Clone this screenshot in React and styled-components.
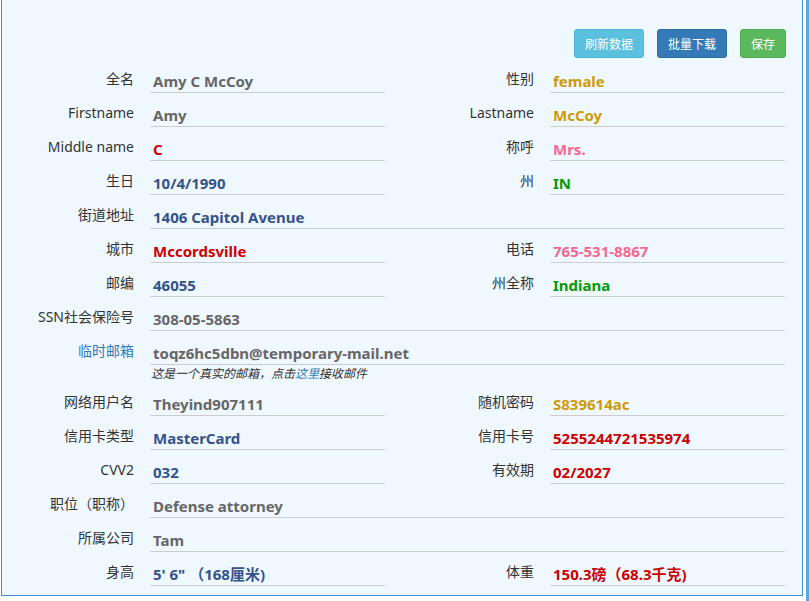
import React from "react";
import styled, { createGlobalStyle } from "styled-components";

const Global = createGlobalStyle`
  html, body { margin: 0; padding: 0; background: #ffffff; }
  body { font-family: "Noto Sans", "Noto Sans CJK SC", sans-serif; color: #333; overflow: hidden; }
`;

const Page = styled.div`
  display: flex;
  align-items: flex-start;
  width: 809px;
  height: 601px;
`;

const Panel = styled.div`
  box-sizing: border-box;
  width: 802px;
  height: 596px;
  margin-left: 1px;
  background: #f0f8ff;
  border: 1px solid #3a8ee0;
  border-top: none;
  padding: 29px 16px 0 0;
`;

const Strip = styled.div`
  width: 3px;
  height: 601px;
  margin-left: 3px;
  background: #5aa7d8;
`;

const Toolbar = styled.div`
  display: flex;
  justify-content: flex-end;
  gap: 13px;
  margin-bottom: 1px;
`;

const variants = {
  info: ["#5bc0de", "#46b8da"],
  primary: ["#337ab7", "#2e6da4"],
  success: ["#5cb85c", "#4cae4c"],
};

const Button = styled.button`
  box-sizing: border-box;
  height: 29px;
  padding: 5px 10px;
  font-family: "Noto Sans CJK SC", sans-serif;
  font-size: 12px;
  line-height: 17px;
  color: #fff;
  border-radius: 3px;
  background: ${(p) => variants[p.$kind][0]};
  border: 1px solid ${(p) => variants[p.$kind][1]};
`;

const Row = styled.div`
  display: grid;
  grid-template-columns: 148px 235px 165px 235px;
  align-items: start;
`;

const Label = styled.div`
  text-align: right;
  padding: 10px 16px 0 0;
  font-size: 14px;
  line-height: 20px;
  color: ${(p) => (p.$link ? "#337ab7" : "#333")};
  white-space: nowrap;
`;

const ValueCol = styled.div`
  grid-column: ${(p) => (p.$full ? "2 / 5" : "auto")};
`;

const colors = {
  gray: "#666666",
  orange: "#cf9a08",
  red: "#cc0000",
  pink: "#f7668f",
  blue: "#34538b",
  green: "#079a07",
};

const Value = styled.div`
  box-sizing: border-box;
  height: 34px;
  padding: 12px 0 1px 3px;
  font-size: 15px;
  font-weight: 700;
  line-height: 20px;
  color: ${(p) => colors[p.$c]};
  border-bottom: 1px solid #cccccc;
  white-space: nowrap;
`;

const Note = styled.div`
  font-size: 12px;
  font-style: italic;
  line-height: 17px;
  color: #333;
  padding-left: 1px;
`;

const Link = styled.span`
  color: #337ab7;
`;

const Field = ({ label, value, c, full, link, children }) => (
  <>
    <Label $link={link}>{label}</Label>
    <ValueCol $full={full}>
      <Value $c={c}>{value}</Value>
      {children}
    </ValueCol>
  </>
);

export default function App() {
  return (
    <>
      <Global />
      <Page>
        <Panel>
          <Toolbar>
            <Button $kind="info">刷新数据</Button>
            <Button $kind="primary">批量下载</Button>
            <Button $kind="success">保存</Button>
          </Toolbar>
          <Row>
            <Field label="全名" value="Amy C McCoy" c="gray" />
            <Field label="性别" value="female" c="orange" />
          </Row>
          <Row>
            <Field label="Firstname" value="Amy" c="gray" />
            <Field label="Lastname" value="McCoy" c="orange" />
          </Row>
          <Row>
            <Field label="Middle name" value="C" c="red" />
            <Field label="称呼" value="Mrs." c="pink" />
          </Row>
          <Row>
            <Field label="生日" value="10/4/1990" c="blue" />
            <Field label="州" value="IN" c="green" />
          </Row>
          <Row>
            <Field label="街道地址" value="1406 Capitol Avenue" c="blue" full />
          </Row>
          <Row>
            <Field label="城市" value="Mccordsville" c="red" />
            <Field label="电话" value="765-531-8867" c="pink" />
          </Row>
          <Row>
            <Field label="邮编" value="46055" c="blue" />
            <Field label="州全称" value="Indiana" c="green" />
          </Row>
          <Row>
            <Field label="SSN社会保险号" value="308-05-5863" c="gray" full />
          </Row>
          <Row>
            <Field label="临时邮箱" value="toqz6hc5dbn@temporary-mail.net" c="gray" full link>
              <Note>
                这是一个真实的邮箱，点击<Link>这里</Link>接收邮件
              </Note>
            </Field>
          </Row>
          <Row>
            <Field label="网络用户名" value="Theyind907111" c="gray" />
            <Field label="随机密码" value="S839614ac" c="orange" />
          </Row>
          <Row>
            <Field label="信用卡类型" value="MasterCard" c="blue" />
            <Field label="信用卡号" value="5255244721535974" c="red" />
          </Row>
          <Row>
            <Field label="CVV2" value="032" c="blue" />
            <Field label="有效期" value="02/2027" c="red" />
          </Row>
          <Row>
            <Field label="职位（职称）" value="Defense attorney" c="gray" full />
          </Row>
          <Row>
            <Field label="所属公司" value="Tam" c="gray" full />
          </Row>
          <Row>
            <Field label="身高" value={`5' 6" （168厘米)`} c="blue" />
            <Field label="体重" value="150.3磅（68.3千克)" c="red" />
          </Row>
        </Panel>
        <Strip />
      </Page>
    </>
  );
}
